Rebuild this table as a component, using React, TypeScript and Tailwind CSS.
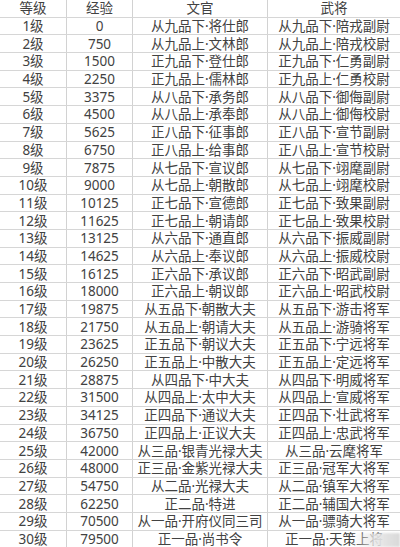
import React from "react";

const rows: [string, string, string, string][] = [
  ["1级", "0", "从九品下·将仕郎", "从九品下·陪戎副尉"],
  ["2级", "750", "从九品上·文林郎", "从九品上·陪戎校尉"],
  ["3级", "1500", "正九品下·登仕郎", "正九品下·仁勇副尉"],
  ["4级", "2250", "正九品上·儒林郎", "正九品上·仁勇校尉"],
  ["5级", "3375", "从八品下·承务郎", "从八品下·御侮副尉"],
  ["6级", "4500", "从八品上·承奉郎", "从八品上·御侮校尉"],
  ["7级", "5625", "正八品下·征事郎", "正八品下·宣节副尉"],
  ["8级", "6750", "正八品上·给事郎", "正八品上·宣节校尉"],
  ["9级", "7875", "从七品下·宣议郎", "从七品下·翊麾副尉"],
  ["10级", "9000", "从七品上·朝散郎", "从七品上·翊麾校尉"],
  ["11级", "10125", "正七品下·宣德郎", "正七品下·致果副尉"],
  ["12级", "11625", "正七品上·朝请郎", "正七品上·致果校尉"],
  ["13级", "13125", "从六品下·通直郎", "从六品下·振威副尉"],
  ["14级", "14625", "从六品上·奉议郎", "从六品上·振威校尉"],
  ["15级", "16125", "正六品下·承议郎", "正六品下·昭武副尉"],
  ["16级", "18000", "正六品上·朝议郎", "正六品上·昭武校尉"],
  ["17级", "19875", "从五品下·朝散大夫", "从五品下·游击将军"],
  ["18级", "21750", "从五品上·朝请大夫", "从五品上·游骑将军"],
  ["19级", "23625", "正五品下·朝议大夫", "正五品下·宁远将军"],
  ["20级", "26250", "正五品上·中散大夫", "正五品上·定远将军"],
  ["21级", "28875", "从四品下·中大夫", "从四品下·明威将军"],
  ["22级", "31500", "从四品上·太中大夫", "从四品上·宣威将军"],
  ["23级", "34125", "正四品下·通议大夫", "正四品下·壮武将军"],
  ["24级", "36750", "正四品上·正议大夫", "正四品上·忠武将军"],
  ["25级", "42000", "从三品·银青光禄大夫", "从三品·云麾将军"],
  ["26级", "48000", "正三品·金紫光禄大夫", "正三品·冠军大将军"],
  ["27级", "54750", "从二品·光禄大夫", "从二品·镇军大将军"],
  ["28级", "62250", "正二品·特进", "正二品·辅国大将军"],
  ["29级", "70500", "从一品·开府仪同三司", "从一品·骠骑大将军"],
  ["30级", "79500", "正一品·尚书令", "正一品·天策上将"],
];

function Row({ cells }: { cells: string[] }) {
  return (
    <div className="grid grid-cols-[67px_66px_135px_132px] h-[17.7px] border-b border-[#d6d6d6]">
      {cells.map((c, i) => (
        <div
          key={i}
          className={
            "flex items-center justify-center whitespace-nowrap leading-[16px] " +
            (i < 3 ? "border-r border-[#d2d2d2]" : "")
          }
        >
          {c}
        </div>
      ))}
    </div>
  );
}

export default function App() {
  return (
    <div
      className="relative w-[400px] h-[547px] overflow-hidden bg-white text-[#424242] text-[13.5px]"
      style={{ fontFamily: '"Noto Sans", "Noto Sans CJK SC", sans-serif' }}
    >
      <Row cells={["等级", "经验", "文官", "武将"]} />
      {rows.map((r) => (
        <Row key={r[0]} cells={r} />
      ))}
      <div className="absolute right-0 bottom-0 w-[48px] h-[14px] bg-gradient-to-r from-white/0 via-[#e8e8e8]/90 to-[#d8d8d8] blur-[1px]" />
    </div>
  );
}
